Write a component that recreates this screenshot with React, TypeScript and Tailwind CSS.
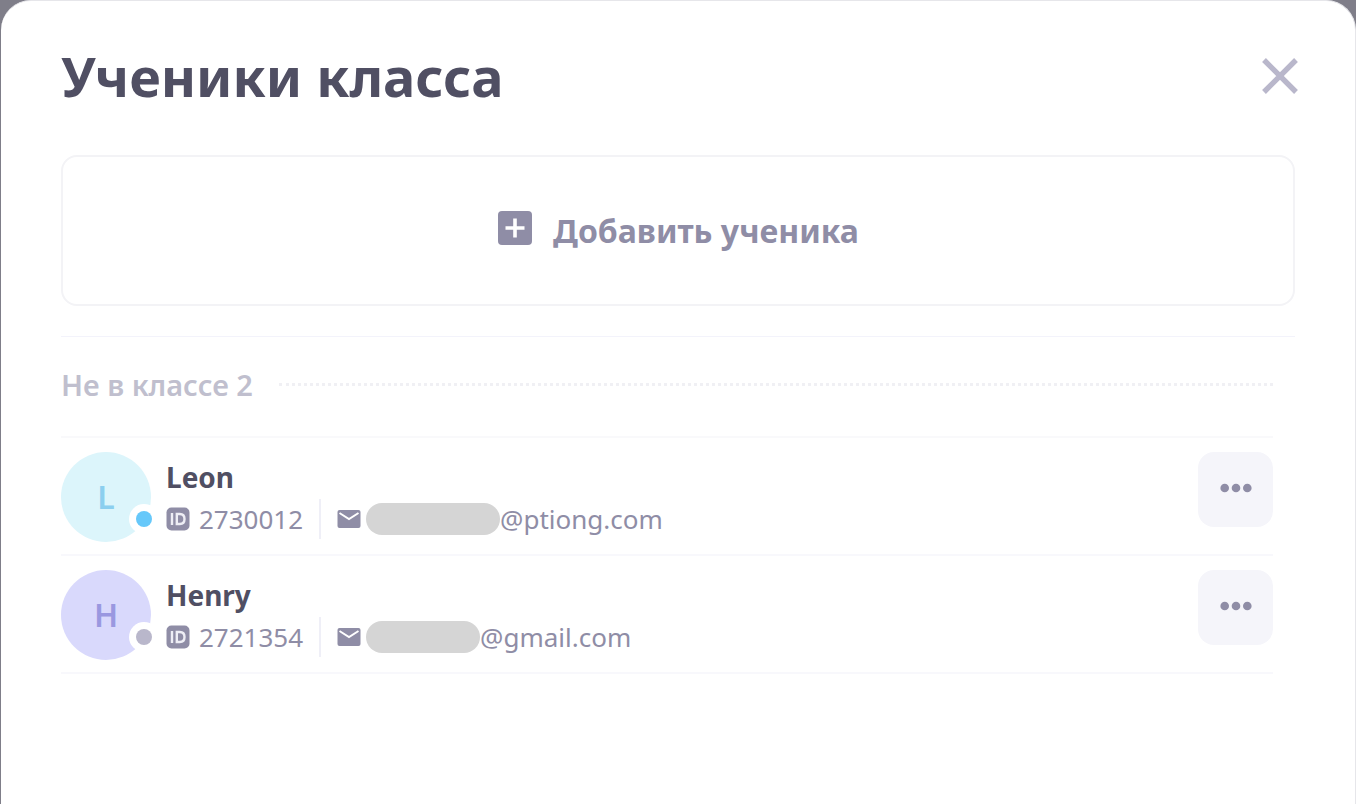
interface Student {
  id: string;
  name: string;
  domain: string;
  avatar: string;
  status: string;
  maskWidth: string;
}

const students: Student[] = [
  {
    id: '2730012', name: 'Leon', domain: '@ptiong.com',
    avatar: 'bg-[#dcf5fb] text-[#8ccfef]', status: 'bg-[#66c8fa]', maskWidth: 'w-[134px]',
  },
  {
    id: '2721354', name: 'Henry', domain: '@gmail.com',
    avatar: 'bg-[#d9d9fc] text-[#9a98e0]', status: 'bg-[#b9b7cb]', maskWidth: 'w-[114px]',
  },
];

function CloseIcon() {
  return (
    <svg className="h-9 w-9" viewBox="0 0 36 36" fill="none" stroke="currentColor" strokeWidth="5.400" aria-hidden="true">
      <path d="M2 2 L34 34 M34 2 L2 34" />
    </svg>
  );
}

function AddIcon() {
  return (
    <svg className="h-10 w-9 shrink-0" viewBox="0 0 36 40" aria-hidden="true">
      <rect x="1" y="0" width="34" height="34" rx="4" fill="currentColor" />
      <path d="M18 7.500v19M8.500 17h19" stroke="#fff" strokeWidth="3.600" />
    </svg>
  );
}

function IdIcon() {
  return (
    <svg className="h-6 w-6 shrink-0" viewBox="0 0 24 24" fill="none" aria-hidden="true">
      <rect x="0.500" y="0.500" width="23" height="23" rx="5" fill="currentColor" />
      <path d="M6 6v12M10.800 7h3c3.200 0 4.700 2 4.700 5s-1.500 5-4.700 5h-3z" stroke="#eeeef5" strokeWidth="2.400" />
    </svg>
  );
}

function MailIcon() {
  return (
    <svg className="h-6 w-6 shrink-0" viewBox="0 0 24 24" fill="none" aria-hidden="true">
      <rect x="0.500" y="3" width="23" height="18" rx="2" fill="currentColor" />
      <path d="M2.500 6 L12 12 L21.500 6" stroke="#fff" strokeWidth="2" />
    </svg>
  );
}

function DotsIcon() {
  return (
    <svg className="h-3 w-8" viewBox="0 0 32 12" fill="currentColor" aria-hidden="true">
      <circle cx="4.700" cy="6" r="4.300" />
      <circle cx="16" cy="6" r="4.300" />
      <circle cx="27.300" cy="6" r="4.300" />
    </svg>
  );
}

function StudentRow({ student }: { student: Student }) {
  return (
    <li className="flex items-start border-b-2 border-[#f8f8fc] pt-3.5 pb-3">
      <div className="relative shrink-0">
        <div className={`flex h-[90px] w-[90px] items-center justify-center rounded-full text-[32px] font-semibold ${student.avatar}`}>
          {student.name[0]}
        </div>
        <span className="absolute -right-2 bottom-2 flex h-[30px] w-[30px] items-center justify-center rounded-full bg-white">
          <span className={`h-4 w-4 rounded-full ${student.status}`} />
        </span>
      </div>
      <div className="ml-[15px] min-w-0 flex-1 pt-[5px]">
        <h3 className="text-[28px] leading-10 font-bold text-[#504f63]">{student.name}</h3>
        <div className="flex h-11 items-center text-[26px] text-[#8f8da6]">
          <IdIcon />
          <span className="ml-[9px]">{student.id}</span>
          <span className="mx-4 h-10 w-0.5 bg-[#efeff7]" />
          <MailIcon />
          <span className={`ml-[5px] h-8 rounded-full bg-[#d5d5d5] ${student.maskWidth}`} />
          <span>{student.domain}</span>
        </div>
      </div>
      <button type="button" aria-label="Меню" className="flex h-[75px] w-[75px] shrink-0 items-center justify-center rounded-2xl bg-[#f5f5fa] pb-1 text-[#8f8da6]">
        <DotsIcon />
      </button>
    </li>
  );
}

export default function App() {
  return (
    <div className="flex min-h-screen flex-col bg-[#7f7e89] pl-px font-['Noto_Sans','Open_Sans',sans-serif]">
      <main className="flex-1 rounded-t-[30px] border-t border-r border-[#e6e6ea] bg-white px-[60px] pt-[37px] pb-10">
        <header className="flex h-[75px] items-center justify-between">
          <h1 className="text-[54px] leading-none font-bold text-[#504f63]">Ученики класса</h1>
          <button type="button" aria-label="Закрыть" className="-mr-[3px] text-[#b9b7cb]">
            <CloseIcon />
          </button>
        </header>

        <button type="button" className="mt-[42px] flex h-[151px] w-full items-center justify-center gap-5 rounded-2xl border-2 border-[#f3f3f6] text-[32px] font-bold text-[#8f8da6]">
          <AddIcon />
          Добавить ученика
        </button>

        <section className="mt-[30px] border-t border-[#f3f3fb] pr-[22px]">
          <div className="flex h-[99px] items-center gap-[26px] pb-1">
            <h2 className="text-[29px] font-semibold text-[#c0bfce]">Не в классе 2</h2>
            <span className="flex-1 border-t-3 border-dotted border-[#f0f0f4]" />
          </div>
          <ul className="border-t-2 border-[#f9f9fb]">
            {students.map(s => <StudentRow key={s.id} student={s} />)}
          </ul>
        </section>
      </main>
    </div>
  );
}
